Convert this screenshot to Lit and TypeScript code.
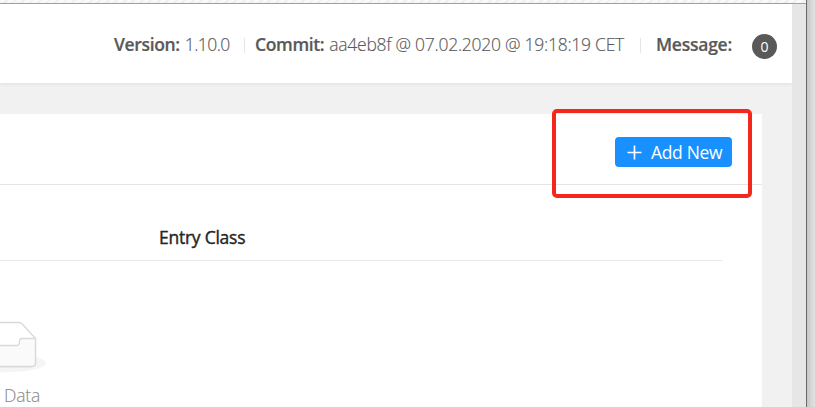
import { LitElement, html, css } from "lit";
import { customElement } from "lit/decorators.js";

@customElement("empty-box")
class EmptyBox extends LitElement {
  static styles = css`
    :host { display: block; height: 52px; }
    svg { display: block; }
  `;
  render() {
    return html`<svg width="92" height="52" viewBox="0 0 92 52" fill="none">
      <ellipse cx="46" cy="42" rx="46" ry="9.5" fill="#f5f5f5" />
      <path d="M10.5 17.5 24 3Q25.5 1.5 27.5 1.5H65Q67 1.5 68.3 3L81.5 17.5V41.5Q81.5 45.5 77.5 45.5H14.5Q10.5 45.5 10.5 41.5Z" fill="#fff" stroke="#d9d9d9" stroke-width="1.3" />
      <path d="M10.5 17.5H26Q28.5 18 28.5 21Q28.5 24.5 32 24.5H62Q65.5 24.5 65.5 21Q65.5 17.5 68 17.5H81.5V41.5Q81.5 45.5 77.5 45.5H14.5Q10.5 45.5 10.5 41.5Z" fill="#fafafa" stroke="#d9d9d9" stroke-width="1.3" />
    </svg>`;
  }
}

@customElement("app-root")
class AppRoot extends LitElement {
  static styles = css`
    :host {
      display: flex; width: 815px; height: 407px; overflow: hidden; position: relative;
      font-family: "Open Sans", "Noto Sans", sans-serif; font-size: 17.5px; color: #595959;
      white-space: nowrap;
    }
    .window { width: 806px; display: flex; flex-direction: column; }
    .chrome {
      height: 3px; border-bottom: 1px solid #a3a3a3;
      background: repeating-linear-gradient(135deg, #f9f9f9 0 4px, #f0f0f0 4px 6px);
    }
    .body { flex: 1; display: flex; }
    .page { width: 792px; background: #f1f1f1; }
    .scroll { width: 14px; background: #e6e6e6; }
    .edge { width: 1px; background: #6a6a6a; }
    .outside { width: 8px; background: linear-gradient(90deg, #c6c6c6, #d6d6d6 50%, #e2e2e2); }
    header {
      height: 79px; background: #fff; box-shadow: 0 1px 4px rgba(0, 21, 41, 0.08);
      display: flex; align-items: center; padding-left: 114px; box-sizing: border-box; line-height: 24px;
    }
    .item { padding-top: 1px; display: flex; flex: none; box-sizing: border-box; }
    .item b { font-weight: 600; letter-spacing: -0.35px; margin-right: 5px; -webkit-text-stroke: 0.2px #595959; }
    .item span { font-weight: 300; letter-spacing: -0.26px; -webkit-text-stroke: 0.15px #595959; }
    .version { width: 130px; }
    .version span { letter-spacing: -0.55px; }
    .commit { width: 395px; padding-left: 10px; }
    .message { padding-left: 15px; width: 96px; }
    .message b { letter-spacing: -0.25px; }
    .rule { width: 1px; height: 15px; background: #e5e5e5; margin-top: 3px; }
    .count {
      width: 25px; height: 25px; border-radius: 50%; background: #595959; color: #fff; flex: none;
      font-size: 14px; line-height: 25px; text-align: center; margin: 5px 0 0 15px;
    }
    .card { margin-top: 31px; width: 762px; height: 293px; background: #fff; }
    .title { height: 70px; border-bottom: 1px solid #e5e5e5; display: flex; justify-content: flex-end; }
    button {
      margin: 23px 30px 0 0; width: 117px; height: 30px; border: 0; border-radius: 4px; padding: 0 0 0 12px;
      background: #1890ff; color: #fff; font: 400 17.5px/30px "Open Sans", "Noto Sans", sans-serif;
      letter-spacing: -0.35px; display: flex; align-items: center; gap: 9px;
    }
    .columns { width: 722px; height: 75px; border-bottom: 1px solid #e8e8e8; display: flex; }
    .columns div {
      margin: 40px 0 0 159px; line-height: 24px; color: #262626; letter-spacing: -0.25px;
      -webkit-text-stroke: 0.4px #262626;
    }
    .empty { margin: 60px 0 0 -46px; width: 92px; display: flex; flex-direction: column; }
    .empty p {
      margin: 10px 6px 0 0; text-align: right; line-height: 24px; color: #8c8c8c; font-weight: 300;
      letter-spacing: -0.2px; -webkit-text-stroke: 0.15px #8c8c8c;
    }
    .highlight {
      position: absolute; left: 552px; top: 109px; width: 200px; height: 89px; box-sizing: border-box;
      border: 4px solid #f5261b; border-radius: 5px;
    }
  `;
  render() {
    return html`
      <div class="window">
        <div class="chrome"></div>
        <div class="body">
          <div class="page">
            <header>
              <div class="item version"><b>Version:</b><span>1.10.0</span></div>
              <i class="rule"></i>
              <div class="item commit"><b>Commit:</b><span>aa4eb8f @ 07.02.2020 @ 19:18:19 CET</span></div>
              <i class="rule"></i>
              <div class="item message"><b>Message:</b></div>
              <div class="count">0</div>
            </header>
            <section class="card">
              <div class="title">
                <button>
                  <svg width="15" height="15" viewBox="0 0 15 15"><path d="M7.5 .5v14M.5 7.5h14" stroke="#fff" stroke-width="1.7" /></svg>
                  <span>Add New</span>
                </button>
              </div>
              <div class="columns"><div>Entry Class</div></div>
              <div class="empty"><empty-box></empty-box><p>Data</p></div>
            </section>
          </div>
          <div class="scroll"></div>
        </div>
      </div>
      <div class="edge"></div>
      <div class="outside"></div>
      <div class="highlight"></div>
    `;
  }
}
